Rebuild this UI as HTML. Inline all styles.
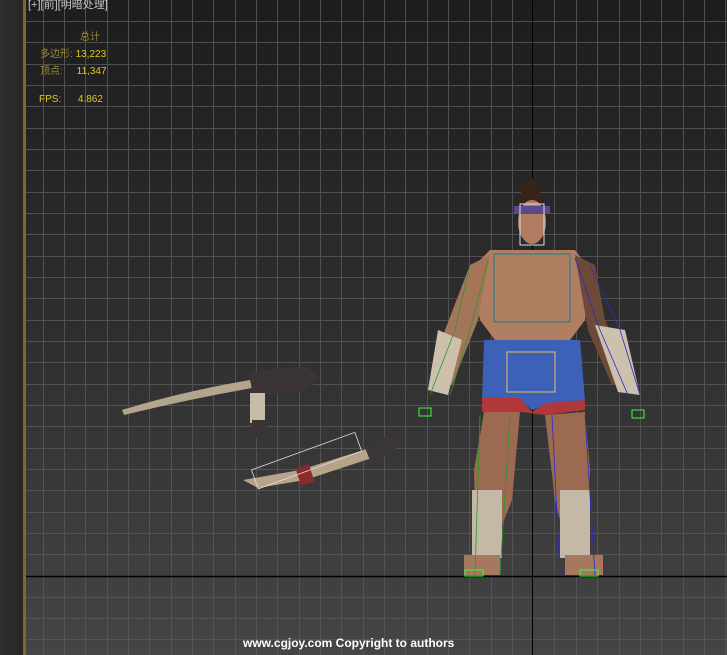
<!DOCTYPE html>
<html><head><meta charset="utf-8"><style>
body{margin:0;width:727px;height:655px;overflow:hidden;background:#2c2c2c;font-family:"Liberation Sans","Noto Sans CJK SC",sans-serif}
#vp{position:absolute;left:26px;top:0;width:701px;height:655px}
.t{position:absolute;font-size:10px;white-space:nowrap}
</style></head><body>
<div style="position:absolute;left:0;top:0;width:24px;height:655px;background:linear-gradient(90deg,#2e2e2e,#262626)"></div>
<div style="position:absolute;left:23px;top:0;width:3px;height:655px;background:#7d6a2a"></div>
<svg id="vp" width="701" height="655" viewBox="26 0 701 655" xmlns="http://www.w3.org/2000/svg">
<defs>
<linearGradient id="bg" x1="0" y1="0" x2="0" y2="1"><stop offset="0" stop-color="#1d1d1d"/><stop offset="0.5" stop-color="#2e2e2e"/><stop offset="1" stop-color="#454545"/></linearGradient>
<linearGradient id="gl" x1="0" y1="0" x2="0" y2="1"><stop offset="0" stop-color="#444"/><stop offset="1" stop-color="#5e5e5e"/></linearGradient>
</defs>
<rect x="26" y="0" width="701" height="655" fill="url(#bg)"/>
<g stroke="#585858" stroke-width="1" shape-rendering="crispEdges" opacity="0.85">
<path d="M43.5 0V655M64.5 0V655M85.5 0V655M107.5 0V655M128.5 0V655M149.5 0V655M171.5 0V655M192.5 0V655M213.5 0V655M235.5 0V655M256.5 0V655M277.5 0V655M299.5 0V655M320.5 0V655M341.5 0V655M363.5 0V655M384.5 0V655M405.5 0V655M427.5 0V655M448.5 0V655M469.5 0V655M491.5 0V655M512.5 0V655M554.5 0V655M576.5 0V655M597.5 0V655M619.5 0V655M640.5 0V655M661.5 0V655M683.5 0V655M704.5 0V655M725.5 0V655"/>
<path d="M26 21.5H727M26 42.5H727M26 64.5H727M26 85.5H727M26 106.5H727M26 128.5H727M26 149.5H727M26 170.5H727M26 192.5H727M26 213.5H727M26 234.5H727M26 256.5H727M26 277.5H727M26 298.5H727M26 320.5H727M26 341.5H727M26 362.5H727M26 384.5H727M26 405.5H727M26 426.5H727M26 448.5H727M26 469.5H727M26 490.5H727M26 512.5H727M26 533.5H727M26 554.5H727M26 597.5H727M26 618.5H727M26 639.5H727"/>
</g>
<line x1="26" y1="576.5" x2="727" y2="576.5" stroke="#000" stroke-width="1.5"/>
<line x1="532.5" y1="0" x2="532.5" y2="655" stroke="#000" stroke-width="1"/>
<!-- swords -->
<path d="M122 410 Q180 392 250 380 L252 388 Q185 400 124 415Z" fill="#b3a48c"/>
<path d="M250 372 L305 366 L320 378 L305 392 L252 395Z" fill="#3a3434"/>
<rect x="250" y="393" width="15" height="30" fill="#c8bba8"/><rect x="252" y="420" width="15" height="18" fill="#3a3434"/>
<path d="M243 480 L300 470 L370 448 L372 458 L305 480 L258 488Z" fill="#b7a38a"/>
<rect x="298" y="466" width="14" height="18" fill="#8a2a2a" transform="rotate(-18 305 475)"/>
<path d="M365 448 L388 436 L400 442 L392 455 L370 460Z" fill="#3c3636"/>
<rect x="255" y="450" width="110" height="20" fill="none" stroke="#ddd" stroke-width="0.8" transform="rotate(-20 310 470)"/>
<!-- character -->
<path d="M518 205 L523 185 L532 178 L540 190 L545 210Z" fill="#3a2218"/>
<ellipse cx="532" cy="222" rx="14" ry="22" fill="#b07d60"/>
<rect x="514" y="206" width="36" height="8" fill="#5a4a8a"/>
<path d="M490 250 L575 250 L590 270 L585 320 L570 340 L495 340 L480 320 L470 270Z" fill="#b07f62"/>
<path d="M470 265 L490 255 L478 320 L452 385 L432 380 L445 330Z" fill="#a57559"/>
<path d="M575 255 L595 265 L605 320 L630 380 L612 385 L588 330Z" fill="#6d4a38"/>
<path d="M438 330 L462 340 L448 395 L428 390Z" fill="#cdc0ac"/>
<path d="M595 325 L625 330 L640 395 L618 392Z" fill="#cdc0ac"/>
<path d="M484 340 L580 340 L585 400 L545 405 L532 410 L520 400 L482 402Z" fill="#3d60b8"/>
<path d="M482 398 L520 398 L532 412 L545 403 L585 400 L585 410 L545 415 L522 412 L482 412Z" fill="#b0383a"/>
<path d="M484 412 L520 412 L512 500 L496 540 L476 540 L474 470Z" fill="#9b6a50"/>
<path d="M545 415 L585 412 L590 470 L588 540 L565 540 L555 500Z" fill="#9b6a50"/>
<rect x="472" y="490" width="30" height="68" fill="#c4b8a6"/>
<rect x="560" y="490" width="30" height="68" fill="#c4b8a6"/>
<rect x="464" y="555" width="36" height="20" fill="#a77860"/>
<rect x="565" y="555" width="38" height="20" fill="#a77860"/>
<rect x="520" y="204" width="24" height="41" fill="none" stroke="#dde" stroke-width="1"/>
<rect x="494" y="254" width="76" height="68" fill="none" stroke="#1a7a90" stroke-width="1"/>
<rect x="507" y="352" width="48" height="40" fill="none" stroke="#e8c060" stroke-width="1"/>
<path d="M470 265 L455 330 L430 395 M488 260 L470 330 L450 395 M480 415 L475 575 M510 415 L500 575" stroke="#2a9a2a" stroke-width="0.8" fill="none"/>
<path d="M575 258 L600 330 L628 395 M590 265 L620 330 L640 395 M552 415 L560 575 M585 415 L595 575" stroke="#2a2ad0" stroke-width="0.8" fill="none"/>
<rect x="419" y="408" width="12" height="8" fill="none" stroke="#3f3" stroke-width="1"/>
<rect x="632" y="410" width="12" height="8" fill="none" stroke="#3f3" stroke-width="1"/>
<rect x="465" y="570" width="18" height="6" fill="none" stroke="#3f3" stroke-width="1"/>
<rect x="580" y="570" width="18" height="6" fill="none" stroke="#3f3" stroke-width="1"/>
</svg>
<div class="t" style="left:28px;top:-4px;color:#c8c8c8;font-size:11px">[+][前][明暗处理]</div>
<div class="t" style="left:80px;top:28px;color:#9a8a3a">总计</div>
<div class="t" style="left:40px;top:45px;color:#9a8a3a">多边形:&nbsp;<span style="color:#e0c820">13,223</span></div>
<div class="t" style="left:40px;top:62px;color:#9a8a3a">顶点:&nbsp;&nbsp;&nbsp;&nbsp;&nbsp;<span style="color:#e0c820">11,347</span></div>
<div class="t" style="left:39px;top:94px;color:#e0c820">FPS:&nbsp;&nbsp;&nbsp;&nbsp;&nbsp;&nbsp;4.862</div>
<div class="t" style="left:243px;top:636px;color:#fff;font-weight:bold;font-size:12px">www.cgjoy.com Copyright to authors</div>
</body></html>
